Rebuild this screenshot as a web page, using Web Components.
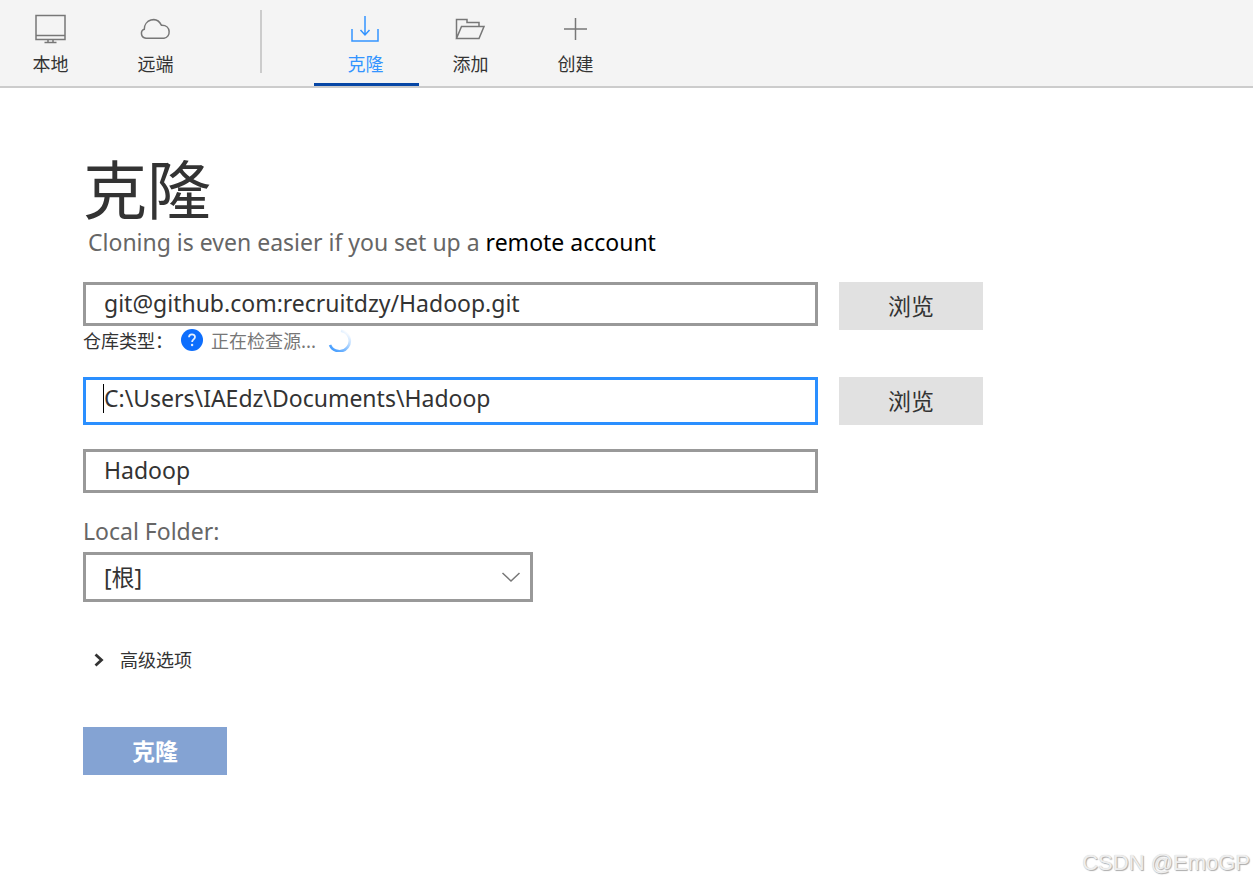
<!DOCTYPE html>
<html lang="zh-CN">
<head>
<meta charset="utf-8">
<meta name="viewport" content="width=device-width, initial-scale=1">
<title>克隆</title>
<style>
  html { height: 100%; }
  body {
    margin: 0; min-height: 100%; background: #fff; color: #333; overflow-x: hidden;
    display: flex; flex-direction: column;
    font-family: "Noto Sans", "Noto Sans CJK SC", sans-serif; font-size: 23px; line-height: 32px;
  }
</style>
</head>
<body>
<app-toolbar>
  <tool-tab icon="monitor">本地</tool-tab>
  <tool-tab icon="cloud">远端</tool-tab>
  <tool-divider></tool-divider>
  <tool-tab icon="clone" active>克隆</tool-tab>
  <tool-tab icon="folder">添加</tool-tab>
  <tool-tab icon="plus">创建</tool-tab>
</app-toolbar>
<clone-page></clone-page>

<script>
const define = (name, html, setup) => {
  const template = document.createElement('template');
  template.innerHTML = html;
  customElements.define(name, class extends HTMLElement {
    constructor() {
      super();
      this.attachShadow({ mode: 'open' }).append(template.content.cloneNode(true));
    }
    connectedCallback() { if (setup) setup(this, this.shadowRoot); }
  });
};

const icons = {
  monitor: '<rect x="1" y="2.5" width="29" height="24"/><path d="M1 22.5h29M13 26.5v3M18 26.5v3M9.500 29.500h12"/>',
  cloud: '<path d="M6 25.200c-5.800-.8-5.700-7.700-1.700-8.900C4 7 16.500 2.300 21.500 12.300c10-.3 9.500 12.200 2.500 12.900z"/>',
  clone: '<path d="M2 16v12h26V16"/><path d="M15 3v19M10.500 17l4.500 5 4.500-5"/>',
  folder: '<path d="M1.500 25.500v-19h10.500v3h12v4M1.500 25.500l5-12h22.500l-5 12z"/>',
  plus: '<path d="M15.500 5v22M4 16h23"/>'
};

define('app-toolbar', `
  <style>
    :host { display: block; background: #f4f4f4; border-bottom: 2px solid #ccc; }
    nav { display: flex; height: 86px; margin-left: -1px; }
  </style>
  <nav aria-label="工具栏"><slot></slot></nav>`);

define('tool-divider', `
  <style>
    :host { display: flex; justify-content: center; flex: 0 0 105px; padding: 10px 2px 13px 0; box-sizing: border-box; }
    span { width: 2px; background: #ccc; }
  </style>
  <span></span>`);

define('tool-tab', `
  <style>
    :host { display: flex; flex: 0 0 105px; }
    button {
      flex: 1; display: flex; flex-direction: column; align-items: center; gap: 6px;
      padding: 13px 2px 0 0; border: 0; border-bottom: 3px solid transparent; background: none;
      color: #333; font: 18px/24px "Noto Sans CJK SC", sans-serif;
    }
    svg { width: 31px; height: 32px; fill: none; stroke: #777; stroke-width: 1.5; flex: none; }
    :host([active]) button { color: #3394ff; border-bottom-color: #0747a6; }
    :host([active]) svg { stroke: #3394ff; }
  </style>
  <button type="button"><svg viewBox="0 0 31 32" aria-hidden="true"></svg><span><slot></slot></span></button>`,
  (el, root) => { root.querySelector('svg').innerHTML = icons[el.getAttribute('icon')]; });

define('text-field', `
  <style>
    :host { display: block; position: relative; }
    input {
      display: block; width: 100%; height: 44px; box-sizing: border-box; margin: 0;
      border: 3px solid #999; border-radius: 0; outline: 0; padding: 0 17px 2px 18px;
      background: #fff; color: #333; font: inherit;
    }
    i { display: none; }
    :host([current]) input { height: 48px; border-color: #2a8fff; padding-bottom: 6px; }
    :host([current]) i { display: block; position: absolute; left: 20px; top: 7px; width: 1px; height: 29px; background: #000; }
  </style>
  <input type="text" spellcheck="false"><i></i>`,
  (el, root) => {
    const input = root.querySelector('input');
    input.value = el.getAttribute('value');
    input.setAttribute('aria-label', el.getAttribute('label'));
  });

define('push-button', `
  <style>
    :host { display: block; width: 144px; }
    button {
      display: block; width: 100%; height: 48px; border: 0; padding: 0 0 2px; background: #e1e1e1; color: #333;
      font: 23px/32px "Noto Sans CJK SC", sans-serif;
    }
    :host([primary]) button { background: #84a3d3; color: #fff; font-weight: 700; }
  </style>
  <button type="button"><slot></slot></button>`);

define('source-status', `
  <style>
    :host { display: flex; align-items: center; height: 28px; margin-bottom: 2px; font: 18px/24px "Noto Sans CJK SC", sans-serif; }
    .label { width: 97px; white-space: nowrap; }
    svg { flex: none; }
    .text { color: #777; margin: 0 12px 0 7px; }
  </style>
  <span class="label">仓库类型：</span>
  <svg width="24" height="24" viewBox="0 0 24 24" aria-hidden="true">
    <circle cx="12" cy="12" r="11" fill="#0d6efd"/>
    <path d="M9 9.300c0-4 6-3.800 6-.3 0 2.400-2.900 2.300-2.900 5" fill="none" stroke="#e4efff" stroke-width="1.800"/>
    <circle cx="12.100" cy="17" r="1.200" fill="#e4efff"/>
  </svg>
  <span class="text">正在检查源...</span>
  <svg width="24" height="24" viewBox="0 0 24 24" aria-hidden="true">
    <defs><linearGradient id="fade" x1="0" y1="1" x2=".8" y2="0">
      <stop offset="0" stop-color="#3394ff"/><stop offset=".4" stop-color="#7ab9ff"/><stop offset="1" stop-color="#fff"/>
    </linearGradient></defs>
    <path d="M2 17A10.300 10.300 0 1 0 13 2.700" fill="none" stroke="url(#fade)" stroke-width="2.600"/>
  </svg>`);

define('folder-select', `
  <style>
    :host { display: block; max-width: 450px; }
    label { display: block; color: #666; margin-bottom: 5px; }
    .box { display: grid; align-items: center; }
    select, svg { grid-area: 1 / 1; }
    select {
      appearance: none; width: 100%; height: 50px; border: 3px solid #999; border-radius: 0; margin: 0;
      padding: 0 44px 0 18px; background: #fff; color: #333;
      font: 23px/32px "Noto Sans", "Noto Sans CJK SC", sans-serif;
    }
    svg { justify-self: end; margin-right: 12px; pointer-events: none; }
  </style>
  <label for="folder">Local Folder:</label>
  <div class="box">
    <select id="folder"><option>[根]</option></select>
    <svg width="20" height="12" viewBox="0 0 20 12" fill="none" stroke="#777" stroke-width="1.500" aria-hidden="true"><path d="M1.500 2l8.500 8 8.500-8"/></svg>
  </div>`);

define('advanced-options', `
  <style>
    :host { display: block; }
    button { display: flex; align-items: center; gap: 15px; border: 0; padding: 0 0 0 10px; background: none; color: #333; font: 18px/24px "Noto Sans CJK SC", sans-serif; }
  </style>
  <button type="button" aria-expanded="false">
    <svg width="12" height="16" viewBox="0 0 12 16" fill="none" stroke="#333" stroke-width="2.800" aria-hidden="true"><path d="M2.500 3.500l6 5.500-6 5.500"/></svg>
    <slot></slot>
  </button>`);

define('water-mark', `
  <style>
    :host {
      display: block; text-align: right; padding: 0 3px 7px; white-space: nowrap; color: #eee;
      font: 22px/28px "Liberation Sans", sans-serif; text-shadow: 1px 1px 1px #aaa, 0 0 1px #ccc;
    }
  </style>
  <slot></slot>`);

define('clone-page', `
  <style>
    :host { flex: 1; display: flex; flex-direction: column; justify-content: space-between; }
    main { padding: 62px 24px 24px 83px; }
    h1 { margin: 0 0 4px; font: 64px/72px "Noto Sans CJK SC", sans-serif; font-weight: 400; }
    p { margin: 0 0 24px; padding-left: 5px; color: #666; }
    a { color: #000; text-decoration: none; }
    .fields { display: grid; grid-template-columns: minmax(0, 735px) 144px; column-gap: 21px; align-items: start; }
    .path { margin-top: 21px; }
    .name { margin: 24px 0 22px; grid-column: 1; }
    advanced-options { margin: 45px 0 56px; }
  </style>
  <main>
    <h1>克隆</h1>
    <p>Cloning is even easier if you set up a <a href="#account">remote account</a></p>
    <div class="fields">
      <div>
        <text-field label="源路径 / URL" value="git@github.com:recruitdzy/Hadoop.git"></text-field>
        <source-status></source-status>
      </div>
      <push-button>浏览</push-button>
      <text-field class="path" current label="目标路径" value="C:\\Users\\IAEdz\\Documents\\Hadoop"></text-field>
      <push-button class="path">浏览</push-button>
      <text-field class="name" label="名称" value="Hadoop"></text-field>
    </div>
    <folder-select></folder-select>
    <advanced-options>高级选项</advanced-options>
    <push-button primary>克隆</push-button>
  </main>
  <water-mark>CSDN @EmoGP</water-mark>`);
</script>
</body>
</html>
